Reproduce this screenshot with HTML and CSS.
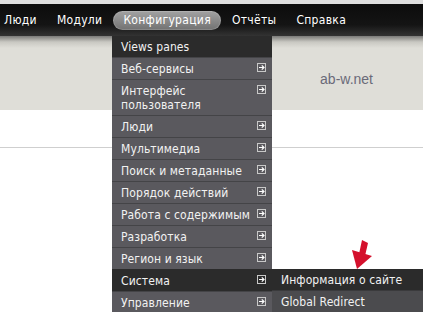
FILE: index.html
```html
<!DOCTYPE html>
<html lang="ru">
<head>
    <meta charset="UTF-8">
    <title>Конфигурация</title>
    <link rel="stylesheet" href="styles.css">
</head>
<body>
    <div class="topline"></div>
    <div class="navbar">
        <ul class="nav">
            <li><a href="#">Люди</a></li>
            <li><a href="#">Модули</a></li>
            <li class="active"><a href="#">Конфигурация</a></li>
            <li><a href="#">Отчёты</a></li>
            <li><a href="#">Справка</a></li>
        </ul>
    </div>
    <div class="page">
        <div class="header">
            <span class="site-name">ab-w.net</span>
        </div>
        <div class="content">
            <div class="rule"></div>
        </div>

        <ul class="dropdown">
            <li class="dark"><span>Views panes</span></li>
            <li><span>Веб-сервисы</span><svg class="go" viewBox="0 0 9 9"><rect x="0.5" y="0.5" width="8" height="8"/><path d="M2 4.5h5M4.8 2.3l2.2 2.2-2.2 2.2"/></svg></li>
            <li><span>Интерфейс<br>пользователя</span><svg class="go" viewBox="0 0 9 9"><rect x="0.5" y="0.5" width="8" height="8"/><path d="M2 4.5h5M4.8 2.3l2.2 2.2-2.2 2.2"/></svg></li>
            <li><span>Люди</span><svg class="go" viewBox="0 0 9 9"><rect x="0.5" y="0.5" width="8" height="8"/><path d="M2 4.5h5M4.8 2.3l2.2 2.2-2.2 2.2"/></svg></li>
            <li><span>Мультимедиа</span><svg class="go" viewBox="0 0 9 9"><rect x="0.5" y="0.5" width="8" height="8"/><path d="M2 4.5h5M4.8 2.3l2.2 2.2-2.2 2.2"/></svg></li>
            <li><span>Поиск и метаданные</span><svg class="go" viewBox="0 0 9 9"><rect x="0.5" y="0.5" width="8" height="8"/><path d="M2 4.5h5M4.8 2.3l2.2 2.2-2.2 2.2"/></svg></li>
            <li><span>Порядок действий</span><svg class="go" viewBox="0 0 9 9"><rect x="0.5" y="0.5" width="8" height="8"/><path d="M2 4.5h5M4.8 2.3l2.2 2.2-2.2 2.2"/></svg></li>
            <li><span>Работа с содержимым</span><svg class="go" viewBox="0 0 9 9"><rect x="0.5" y="0.5" width="8" height="8"/><path d="M2 4.5h5M4.8 2.3l2.2 2.2-2.2 2.2"/></svg></li>
            <li><span>Разработка</span><svg class="go" viewBox="0 0 9 9"><rect x="0.5" y="0.5" width="8" height="8"/><path d="M2 4.5h5M4.8 2.3l2.2 2.2-2.2 2.2"/></svg></li>
            <li><span>Регион и язык</span><svg class="go" viewBox="0 0 9 9"><rect x="0.5" y="0.5" width="8" height="8"/><path d="M2 4.5h5M4.8 2.3l2.2 2.2-2.2 2.2"/></svg></li>
            <li class="dark open">
                <span>Система</span><svg class="go" viewBox="0 0 9 9"><rect x="0.5" y="0.5" width="8" height="8"/><path d="M2 4.5h5M4.8 2.3l2.2 2.2-2.2 2.2"/></svg>
                <ul class="submenu">
                    <li class="dark"><span>Информация о сайте</span></li>
                    <li class="sub"><span>Global Redirect</span></li>
                </ul>
            </li>
            <li><span>Управление</span><svg class="go" viewBox="0 0 9 9"><rect x="0.5" y="0.5" width="8" height="8"/><path d="M2 4.5h5M4.8 2.3l2.2 2.2-2.2 2.2"/></svg></li>
        </ul>

        <!-- red pointer added on the screenshot -->
        <svg class="pointer" viewBox="0 0 24 36">
            <polygon points="12,4 18,7 15,20 9,18" />
            <polygon points="2,14 22,20 7,33" />
        </svg>
    </div>
</body>
</html>
```

FILE: styles.css
```css
html {
    height: 100%;
    overflow: hidden;
}
body {
    margin: 0;
    height: 100%;
    font-family: "DejaVu Sans Condensed", "DejaVu Sans", Verdana, sans-serif;
    font-size: 12px;
    letter-spacing: 0.1px;
    background: #fff;
}
ul {
    list-style: none;
    margin: 0;
    padding: 0;
}
.topline {
    height: 4px;
    background: #dedede;
}
.navbar {
    height: 32px;
    background: linear-gradient(to bottom, #0c0c0c 0%, #141414 65%, #333 100%);
}
.nav {
    display: flex;
    align-items: center;
    height: 32px;
    margin-left: -6px;
}
.nav a {
    display: block;
    padding: 0 10px;
    line-height: 19px;
    letter-spacing: 0.3px;
    color: #fff;
    text-decoration: none;
}
.nav .active a {
    margin: 0 1px;
    background: linear-gradient(to bottom, #a2a2a2, #727272);
    border-radius: 10px;
    box-shadow: inset 0 0 0 1px rgba(255, 255, 255, 0.15);
}
.page {
    position: relative;
    height: 276px;
}
.header {
    height: 74px;
    display: flex;
    justify-content: flex-end;
    align-items: flex-start;
    padding-right: 50px;
    background: linear-gradient(to bottom, #7a7a78 0px, #c9c8c2 6px, #dfded8 12px, #dfded8 100%);
    box-sizing: border-box;
}
.site-name {
    margin-top: 35px;
    font-family: "Liberation Sans", Arial, sans-serif;
    font-size: 14px;
    letter-spacing: 0;
    color: #6a6a78;
}
.content {
    padding-top: 37px;
}
.rule {
    height: 1px;
    background: #cfcfcf;
}
.dropdown {
    position: absolute;
    top: 0;
    left: 112px;
    width: 160px;
    color: #f2f2f2;
}
.dropdown li {
    position: relative;
    display: flex;
    justify-content: space-between;
    align-items: flex-start;
    padding: 4px 6px 3px 9px;
    line-height: 14px;
    background: #5a595e;
    border-top: 1px solid #444447;
}
.dropdown li:first-child {
    border-top: none;
}
.dropdown li.dark {
    background: #2b2b2b;
    border-top-color: #2b2b2b;
}
.go {
    width: 9px;
    height: 9px;
    margin-top: 1px;
    flex: none;
}
.go rect {
    fill: none;
    stroke: #c8c8c8;
    stroke-width: 1;
}
.go path {
    fill: none;
    stroke: #fff;
    stroke-width: 1.2;
}
.submenu {
    position: absolute;
    top: -1px;
    left: 160px;
    width: 160px;
}
.dropdown .submenu li {
    padding-left: 9px;
}
.dropdown .submenu li.dark {
    border-top: none;
}
.dropdown .submenu li.sub {
    background: #4b4b4e;
    border-top-color: #3a3a3c;
}
.pointer {
    position: absolute;
    left: 350px;
    top: 200px;
    width: 24px;
    height: 36px;
}
.pointer polygon {
    fill: #d4102c;
}
```
